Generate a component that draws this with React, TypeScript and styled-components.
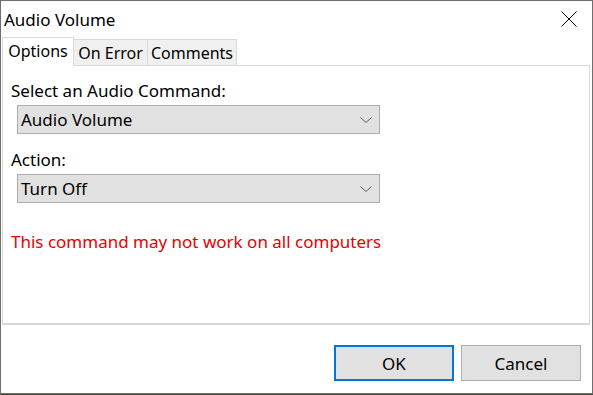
import React from 'react';
import styled, { createGlobalStyle } from 'styled-components';

const GlobalStyle = createGlobalStyle`
  html, body {
    margin: 0;
    padding: 0;
    background: #4a4a44;
  }
  body {
    font-family: "Noto Sans", "Open Sans", sans-serif;
    font-size: 17px;
    color: #000;
  }
`;

const Window = styled.div`
  box-sizing: border-box;
  width: 593px;
  height: 394px;
  background: #fff;
  border: 1px solid #6e6e6e;
  display: flex;
  flex-direction: column;
`;

const TitleBar = styled.div`
  height: 36px;
  display: flex;
  align-items: center;
  justify-content: space-between;
  padding-left: 3px;
  padding-right: 15px;
  flex-shrink: 0;
`;

const Title = styled.div`
  font-size: 17px;
  line-height: 20px;
  padding-top: 1px;
`;

const CloseButton = styled.button`
  border: none;
  background: transparent;
  padding: 0;
  width: 16px;
  height: 16px;
  display: flex;
  cursor: pointer;
`;

const TabStrip = styled.div`
  display: flex;
  align-items: flex-end;
  height: 28px;
  margin-left: 1px;
  position: relative;
  z-index: 1;
  flex-shrink: 0;
`;

const Tab = styled.div<{ $active?: boolean; $w: number }>`
  box-sizing: border-box;
  width: ${({ $w }) => $w}px;
  height: ${({ $active }) => ($active ? '29px' : '27px')};
  display: flex;
  align-items: center;
  justify-content: center;
  font-size: 16px;
  line-height: 20px;
  white-space: nowrap;
  background: ${({ $active }) => ($active ? '#fff' : '#f0f0f0')};
  border: 1px solid #d9d9d9;
  border-bottom: ${({ $active }) => ($active ? 'none' : '1px solid #d9d9d9')};
  margin-left: ${({ $active }) => ($active ? '0' : '-1px')};
  margin-bottom: -1px;
  padding-bottom: ${({ $active }) => ($active ? '2px' : '0')};
`;

const Panel = styled.div`
  box-sizing: border-box;
  margin: 0 2px 0 1px;
  height: 260px;
  flex-shrink: 0;
  border: 1px solid #d9d9d9;
  border-bottom-width: 2px;
  background: #fff;
  padding: 15px 0 0 8px;
  display: flex;
  flex-direction: column;
`;

const Label = styled.div`
  height: 20px;
  line-height: 20px;
`;

const Select = styled.div`
  box-sizing: border-box;
  width: 363px;
  height: 29px;
  margin: 4px 0 0 6px;
  background: #e1e1e1;
  border: 1px solid #adadad;
  display: flex;
  align-items: center;
  justify-content: space-between;
  padding: 0 7px 0 3px;
  line-height: 20px;
`;

const Field = styled.div<{ $gap?: number }>`
  display: flex;
  flex-direction: column;
  margin-bottom: ${({ $gap }) => $gap ?? 0}px;
`;

const Warning = styled.div`
  color: #e60000;
  line-height: 20px;
  margin-top: 29px;
`;

const Footer = styled.div`
  flex: 1;
  display: flex;
  justify-content: flex-end;
  align-items: flex-start;
  padding: 20px 11px 0 0;
  gap: 7px;
`;

const Button = styled.button<{ $primary?: boolean }>`
  box-sizing: border-box;
  width: 120px;
  height: 36px;
  background: #e1e1e1;
  border: ${({ $primary }) => ($primary ? '2px solid #0078d7' : '1px solid #adadad')};
  font-family: inherit;
  font-size: 17px;
  color: #000;
  padding: 0;
`;

const Chevron = () => (
  <svg width="12" height="6" viewBox="0 0 12 6">
    <path d="M0.5 0.5 L6 5.5 L11.5 0.5" fill="none" stroke="#606060" strokeWidth="1" />
  </svg>
);

const CloseIcon = () => (
  <svg width="16" height="16" viewBox="0 0 16 16">
    <path d="M0.5 0.5 L15.5 15.5 M15.5 0.5 L0.5 15.5" stroke="#000" strokeWidth="1" />
  </svg>
);

const App: React.FC = () => (
  <>
    <GlobalStyle />
    <Window>
      <TitleBar>
        <Title>Audio Volume</Title>
        <CloseButton aria-label="Close">
          <CloseIcon />
        </CloseButton>
      </TitleBar>
      <TabStrip>
        <Tab $active $w={72}>Options</Tab>
        <Tab $w={75}>On Error</Tab>
        <Tab $w={90}>Comments</Tab>
      </TabStrip>
      <Panel>
        <Field $gap={16}>
          <Label>Select an Audio Command:</Label>
          <Select>
            <span>Audio Volume</span>
            <Chevron />
          </Select>
        </Field>
        <Field>
          <Label>Action:</Label>
          <Select>
            <span>Turn Off</span>
            <Chevron />
          </Select>
        </Field>
        <Warning>This command may not work on all computers</Warning>
      </Panel>
      <Footer>
        <Button $primary>OK</Button>
        <Button>Cancel</Button>
      </Footer>
    </Window>
  </>
);

export default App;
